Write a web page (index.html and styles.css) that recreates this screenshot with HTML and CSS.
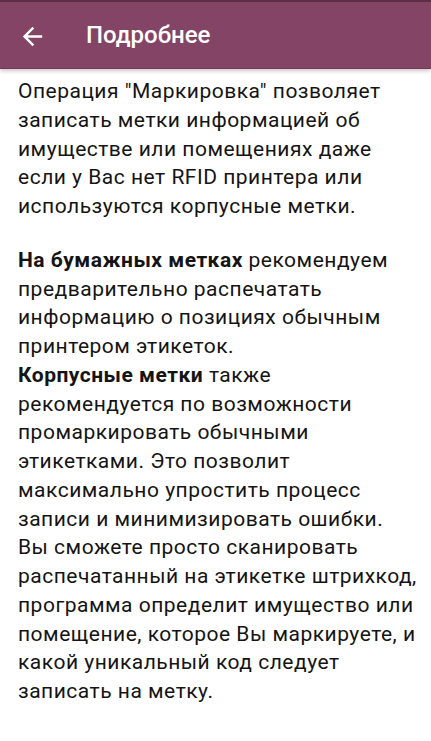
FILE: index.html
```html
<!DOCTYPE html>
<html lang="ru">
<head>
<meta charset="utf-8">
<title>Подробнее</title>
<link rel="stylesheet" href="styles.css">
</head>
<body>
<header class="appbar">
  <svg class="back" viewBox="0 0 24 24" width="29" height="29" aria-hidden="true"><path d="M20 11H7.83l5.59-5.59L12 4l-8 8 8 8 1.41-1.41L7.83 13H20v-2z" fill="#fff"/></svg>
  <h1 class="title">Подробнее</h1>
</header>
<main class="content">
  <p class="para">Операция "Маркировка" позволяет записать метки информацией об имуществе или помещениях даже если у Вас нет RFID принтера или используются корпусные метки.</p>
  <p class="para"><b>На бумажных метках</b> рекомендуем предварительно распечатать информацию о позициях обычным принтером этикеток.<br><b>Корпусные метки</b> также рекомендуется по возможности промаркировать обычными этикетками. Это позволит максимально упростить процесс записи и минимизировать ошибки. Вы сможете просто сканировать распечатанный на этикетке штрихкод, программа определит имущество или помещение, которое Вы маркируете, и какой уникальный код следует записать на метку.</p>
</main>
</body>
</html>
```

FILE: styles.css
```css
html, body {
  margin: 0;
  padding: 0;
  background: #ffffff;
}
body {
  font-family: Roboto, "Noto Sans", sans-serif;
  width: 431px;
  height: 741px;
  overflow: hidden;
}
.appbar {
  box-sizing: border-box;
  height: 69px;
  border-top: 2px solid #5c2f47;
  border-bottom: 1px solid #7a3558;
  background: #834466;
  display: flex;
  align-items: center;
  padding-left: 18px;
  box-shadow: 0 2px 4px rgba(0, 0, 0, 0.22);
  position: relative;
  z-index: 1;
}
.back {
  display: block;
  flex: none;
  margin-top: 2px;
}
.title {
  margin: 0 0 0 39px;
  color: #ffffff;
  font-size: 24px;
  font-weight: 500;
  line-height: 28px;
}
.content {
  padding: 8px 14px 0 18px;
}
.para {
  margin: 0 0 25px 0;
  font-size: 21px;
  letter-spacing: 0.5px;
  line-height: 28.75px;
  color: #141414;
}
.para b {
  font-weight: 700;
}
```
